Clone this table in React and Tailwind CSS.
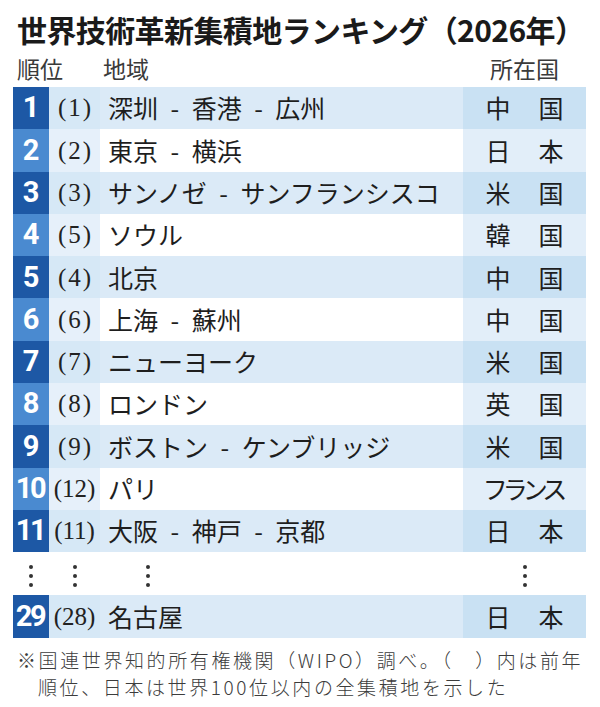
import React from "react";

const rows = [
  { rank: "1", prev: "1", name: "深圳 - 香港 - 広州", country: ["中", "国"] },
  { rank: "2", prev: "2", name: "東京 - 横浜", country: ["日", "本"] },
  { rank: "3", prev: "3", name: "サンノゼ - サンフランシスコ", country: ["米", "国"] },
  { rank: "4", prev: "5", name: "ソウル", country: ["韓", "国"] },
  { rank: "5", prev: "4", name: "北京", country: ["中", "国"] },
  { rank: "6", prev: "6", name: "上海 - 蘇州", country: ["中", "国"] },
  { rank: "7", prev: "7", name: "ニューヨーク", country: ["米", "国"] },
  { rank: "8", prev: "8", name: "ロンドン", country: ["英", "国"] },
  { rank: "9", prev: "9", name: "ボストン - ケンブリッジ", country: ["米", "国"] },
  { rank: "10", prev: "12", name: "パリ", country: "フランス" },
  { rank: "11", prev: "11", name: "大阪 - 神戸 - 京都", country: ["日", "本"] },
];

const sans = "font-['Noto_Sans_CJK_JP','Noto_Sans',sans-serif]";

// three stacked dots, like a vertical ellipsis
const Dots = () => (
  <div className="w-fit flex flex-col items-center gap-[5px] mt-[4px]">
    <span className="block w-[4px] h-[4px] rounded-full bg-[#333]" />
    <span className="block w-[4px] h-[4px] rounded-full bg-[#333]" />
    <span className="block w-[4px] h-[4px] rounded-full bg-[#333]" />
  </div>
);

const Row = ({ row, odd }) => {
  const wide = row.rank.length > 1;
  return (
    <div className={`flex h-[42.3px] ${odd ? "bg-[#dbeaf7]" : "bg-white"}`}>
      <div
        className={`w-[36px] flex items-center justify-center text-white font-['Roboto',sans-serif] font-bold text-[29px] ${
          wide ? "tracking-[-2.5px] pr-[2px]" : ""
        } ${odd ? "bg-[#1d58a5]" : "bg-[#4a8ad0]"}`}
      >
        {row.rank}
      </div>
      <div
        className={`w-[51px] flex items-center justify-center font-['Liberation_Serif',serif] text-[25px] text-[#222] ${
          wide ? "tracking-[0px]" : "tracking-[2px] pl-[2px]"
        } ${odd ? "bg-[#d6e8f6]" : "bg-[#e6f0fa]"}`}
      >
        ({row.prev})
      </div>
      <div className={`flex-1 flex items-center pl-[8px] ${sans} text-[25px] text-[#1e1e1e] whitespace-pre`}>
        {row.name.replace(/ - /g, "\u2002-\u2002")}
      </div>
      <div
        className={`w-[123px] flex items-center justify-center ${sans} text-[25px] text-[#1e1e1e] ${
          odd ? "bg-[#c9e1f3]" : "bg-[#e2eef9]"
        }`}
      >
        {Array.isArray(row.country) ? (
          <div className="w-[78px] flex justify-between">
            <span>{row.country[0]}</span>
            <span>{row.country[1]}</span>
          </div>
        ) : (
          <span className="tracking-[-5px] pr-[4px]">{row.country}</span>
        )}
      </div>
    </div>
  );
};

export default function App() {
  return (
    <div className="w-[600px] h-[707px] bg-white pl-[13px] pr-[14px] pt-[9px] overflow-hidden">
      {/* title */}
      <h1 className={`${sans} font-bold text-[30px] leading-[40px] text-[#1a1a1a] pl-[4px] whitespace-nowrap tracking-[-0.6px]`}>
        世界技術革新集積地ランキング（2026年）
      </h1>

      {/* column headings */}
      <div className={`flex h-[38px] items-center ${sans} text-[23px] text-[#3a3a3a]`}>
        <span className="w-[90px] pl-[4px]">順位</span>
        <span className="flex-1">地域</span>
        <span className="w-[123px] text-center">所在国</span>
      </div>

      {rows.map((row, i) => (
        <Row key={row.rank} row={row} odd={i % 2 === 0} />
      ))}

      {/* ellipsis row */}
      <div className="flex h-[43px] items-center">
        <div className="w-[36px] flex justify-center"><Dots /></div>
        <div className="w-[51px] flex justify-center"><Dots /></div>
        <div className="flex-1 pl-[46px]"><Dots /></div>
        <div className="w-[123px] flex justify-center"><Dots /></div>
      </div>

      <Row row={{ rank: "29", prev: "28", name: "名古屋", country: ["日", "本"] }} odd />

      {/* footnote */}
      <div className={`mt-[8px] ${sans} font-light text-[19px] leading-[27px] text-[#3c3c3c] pl-[4px] whitespace-nowrap tracking-[2.6px]`}>
        <p>※国連世界知的所有権機関（WIPO）調べ。（　）内は前年</p>
        <p className="pl-[21px]">順位、日本は世界100位以内の全集積地を示した</p>
      </div>
    </div>
  );
}
